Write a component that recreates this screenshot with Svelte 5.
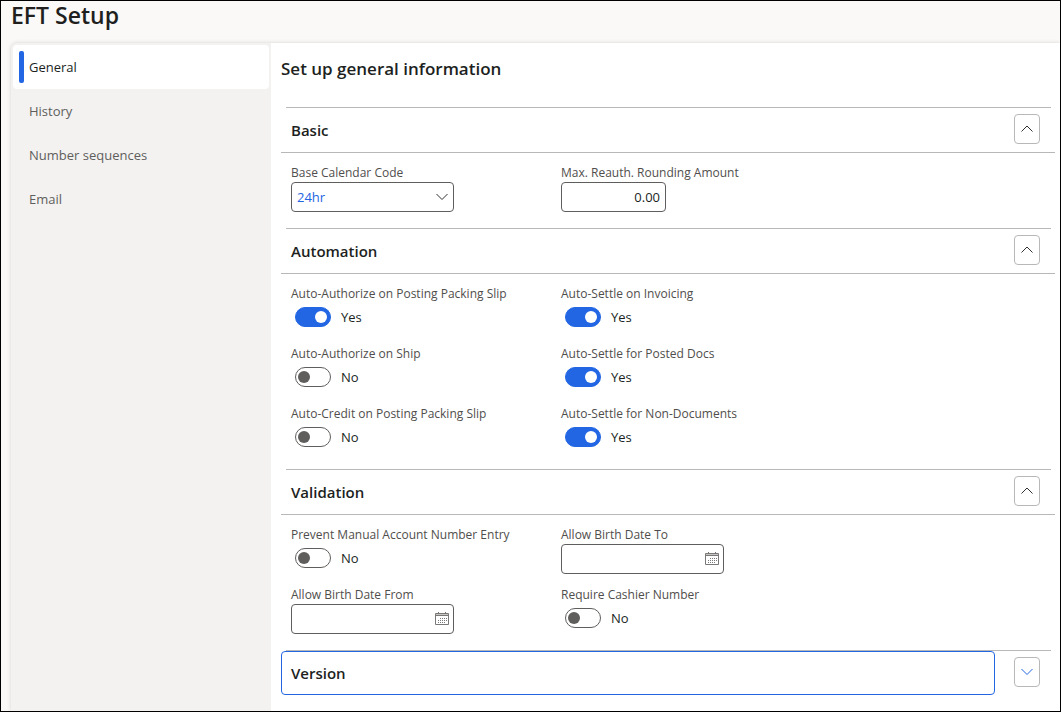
<script>
    const tabs = ["General", "History", "Number sequences", "Email"];
    let activeTab = "General";

    // Each section has two columns of fields
    let sections = [
        {
            title: "Basic",
            open: true,
            columns: [
                [{ id: "calendar", type: "select", label: "Base Calendar Code", value: "24hr" }],
                [{ id: "rounding", type: "number", label: "Max. Reauth. Rounding Amount", value: "0.00" }]
            ]
        },
        {
            title: "Automation",
            open: true,
            columns: [
                [
                    { id: "authPacking", type: "toggle", label: "Auto-Authorize on Posting Packing Slip", value: true },
                    { id: "authShip", type: "toggle", label: "Auto-Authorize on Ship", value: false },
                    { id: "creditPacking", type: "toggle", label: "Auto-Credit on Posting Packing Slip", value: false }
                ],
                [
                    { id: "settleInvoice", type: "toggle", label: "Auto-Settle on Invoicing", value: true },
                    { id: "settlePosted", type: "toggle", label: "Auto-Settle for Posted Docs", value: true },
                    { id: "settleNonDocs", type: "toggle", label: "Auto-Settle for Non-Documents", value: true }
                ]
            ]
        },
        {
            title: "Validation",
            open: true,
            columns: [
                [
                    { id: "preventManual", type: "toggle", label: "Prevent Manual Account Number Entry", value: false },
                    { id: "birthFrom", type: "date", label: "Allow Birth Date From", value: "" }
                ],
                [
                    { id: "birthTo", type: "date", label: "Allow Birth Date To", value: "" },
                    { id: "cashier", type: "toggle", label: "Require Cashier Number", value: false }
                ]
            ]
        },
        { title: "Version", open: false, selected: true, columns: [] }
    ];

    function toggleSection(section) {
        section.open = !section.open;
        sections = sections;
    }
</script>

<div class="page">
    <header>
        <h1>EFT Setup</h1>
    </header>

    <div class="panel">
        <nav>
            {#each tabs as tab}
                <button class="tab" class:active={tab === activeTab} on:click={() => (activeTab = tab)}>
                    <span class="marker"></span>
                    {tab}
                </button>
            {/each}
        </nav>

        <main>
            <h2>Set up general information</h2>

            {#each sections as section}
                <section>
                    <div class="rule"></div>
                    <div class="section-head" class:closed={!section.open}>
                        <button class="section-title" class:selected={section.selected} on:click={() => toggleSection(section)}>
                            {section.title}
                        </button>
                        <button
                            class="collapse"
                            aria-label={section.open ? "Collapse" : "Expand"}
                            on:click={() => toggleSection(section)}
                        >
                            <svg width="14" height="8" viewBox="0 0 14 8">
                                <path d={section.open ? "M1.5 6.5L7 1L12.5 6.5" : "M1.5 1L7 6.5L12.5 1"} />
                            </svg>
                        </button>
                    </div>

                    {#if section.open}
                        <div class="section-body">
                            {#each section.columns as column}
                                <div class="column">
                                    {#each column as field (field.id)}
                                        <div class="field">
                                            <label for={field.id}>{field.label}</label>
                                            {#if field.type === "toggle"}
                                                <div class="toggle">
                                                    <input type="checkbox" id={field.id} bind:checked={field.value} />
                                                    <span>{field.value ? "Yes" : "No"}</span>
                                                </div>
                                            {:else if field.type === "select"}
                                                <div class="box">
                                                    <select id={field.id} bind:value={field.value}>
                                                        <option value="24hr">24hr</option>
                                                    </select>
                                                    <svg class="arrow" width="14" height="8" viewBox="0 0 14 8">
                                                        <path d="M1.5 1L7 6.5L12.5 1" />
                                                    </svg>
                                                </div>
                                            {:else if field.type === "date"}
                                                <div class="box">
                                                    <input type="text" id={field.id} bind:value={field.value} />
                                                    <svg class="calendar" width="14" height="13" viewBox="0 0 14 13">
                                                        <path class="band" d="M1 2.5h12" />
                                                        <path d="M.5 1.5h13v11H.5zM.5 3.5h13M3.5 0v2M10.5 0v2" />
                                                        <path class="days" d="M5 6.5h7M3 8.5h9M3 10.5h7" />
                                                    </svg>
                                                </div>
                                            {:else}
                                                <div class="box small">
                                                    <input class="number" type="text" id={field.id} bind:value={field.value} />
                                                </div>
                                            {/if}
                                        </div>
                                    {/each}
                                </div>
                            {/each}
                        </div>
                    {/if}
                </section>
            {/each}
        </main>
    </div>
</div>

<style>
:global(body) {
    margin: 0;
    background: #faf9f8;
}

.page, .page * {
    box-sizing: border-box;
}

.page {
    display: flex;
    flex-direction: column;
    min-height: 100vh;
    border: 1px solid #000000;
    background: #faf9f8;
    color: #201f1e;
    font-family: "Open Sans", "Noto Sans", sans-serif;
    font-size: 13px;
    overflow: hidden;
}

button, input, select {
    font: inherit;
    color: inherit;
}

header {
    height: 42px;
    padding-left: 10px;
}

h1 {
    margin: 0;
    font-size: 23px;
    line-height: 28px;
    font-weight: 600;
}

.panel {
    display: flex;
    flex: 1;
    margin-left: 10px;
    border-top-left-radius: 6px;
    background: #f3f2f1;
    box-shadow: 0 0 4px rgba(0, 0, 0, 0.15);
}

/* Tabs on the left */
nav {
    flex: 0 0 260px;
    padding: 2px;
}

.tab {
    display: flex;
    align-items: center;
    gap: 5px;
    width: 100%;
    height: 44px;
    padding: 0 6px;
    border: none;
    border-radius: 4px;
    background: none;
    color: #605e5c;
    text-align: left;
    cursor: pointer;
}

.tab.active {
    background: #ffffff;
    color: #201f1e;
}

.marker {
    width: 5px;
    height: 32px;
    border-radius: 2px;
}

.active .marker {
    background: #2266e3;
}

main {
    flex: 1;
    padding: 14px 5px 15px 10px;
    background: #ffffff;
}

h2 {
    margin: 0 0 26px;
    font-size: 17px;
    line-height: 24px;
    font-weight: 600;
}

/* Collapsible sections */
.rule {
    height: 1px;
    margin: 0 4px 0 5px;
    background: #b8b8b8;
}

.section-head {
    display: flex;
    gap: 19px;
    padding-right: 15px;
    border-bottom: 1px solid #b8b8b8;
}

.section-head.closed {
    border-bottom: none;
}

.section-title {
    flex: 1;
    height: 44px;
    padding: 0 9px;
    border: 1px solid transparent;
    border-radius: 4px;
    background: none;
    font-size: 15px;
    font-weight: 600;
    text-align: left;
    cursor: pointer;
}

.section-title.selected {
    border-color: #2266e3;
}

.collapse {
    display: flex;
    align-items: center;
    justify-content: center;
    width: 26px;
    height: 30px;
    margin-top: 6px;
    padding: 0;
    border: 1px solid #b8b8b8;
    border-radius: 4px;
    background: #ffffff;
    cursor: pointer;
}

svg {
    fill: none;
    stroke: #323130;
    stroke-width: 1;
}

.closed svg {
    stroke: #2266e3;
}

.section-body {
    display: flex;
    padding: 11px 10px 4px;
}

.column {
    width: 270px;
}

.field {
    height: 60px;
}

label {
    display: block;
    color: #504e4c;
    font-size: 12px;
    line-height: 18px;
    font-weight: 500;
    white-space: nowrap;
}

.box {
    position: relative;
    width: 163px;
}

.box.small {
    width: 105px;
}

.box input, .box select {
    display: block;
    width: 100%;
    height: 30px;
    margin: 0;
    padding: 0 5px;
    border: 1px solid #605e5c;
    border-radius: 4px;
    background: #ffffff;
}

.box select {
    appearance: none;
    color: #2266e3;
}

.box .number {
    text-align: right;
}

.arrow, .calendar {
    position: absolute;
    top: 11px;
    right: 5px;
    pointer-events: none;
}

.calendar {
    top: 8px;
    stroke: #7a7876;
}

.band {
    stroke: #c8c6c4;
}

.days {
    stroke-dasharray: 1 1;
}

.toggle {
    display: flex;
    align-items: center;
    gap: 10px;
    height: 28px;
    padding-left: 4px;
}

.toggle input {
    appearance: none;
    display: flex;
    align-items: center;
    width: 36px;
    height: 20px;
    margin: 0;
    padding: 0 2px;
    border: 1px solid #605e5c;
    border-radius: 10px;
    background: #ffffff;
    cursor: pointer;
}

.toggle input::before {
    content: "";
    width: 12px;
    height: 12px;
    border-radius: 50%;
    background: #605e5c;
}

.toggle input:checked {
    justify-content: flex-end;
    padding: 0 3px;
    border-color: #2266e3;
    background: #2266e3;
}

.toggle input:checked::before {
    background: #ffffff;
}
</style>
